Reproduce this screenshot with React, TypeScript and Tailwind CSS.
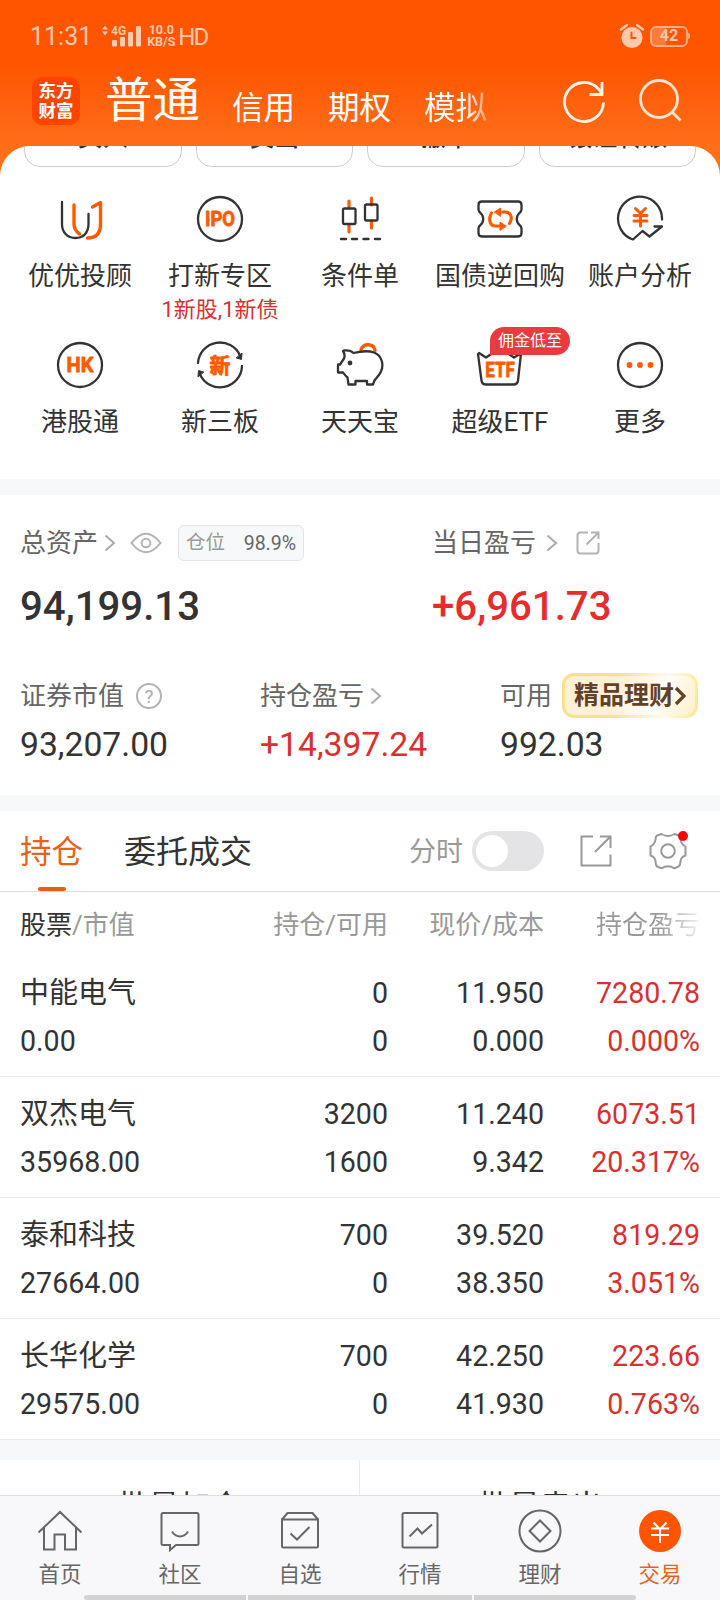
import type { ReactNode } from 'react'
import clsx from 'clsx'

const DARK = '#333333'
const ORANGE = '#ff5a00'

type Shortcut = {
  label: string
  icon: ReactNode
  hint?: string
  badge?: string
}

type Holding = {
  name: string
  value: string
  held: string
  available: string
  price: string
  cost: string
  profit: string
  rate: string
}

function Icon({ children }: { children: ReactNode }) {
  return (
    <svg width="48" height="48" viewBox="0 0 48 48" fill="none" stroke={DARK} strokeWidth="2.300" strokeLinecap="round" strokeLinejoin="round">
      {children}
    </svg>
  )
}

function IconText({ children, size, y, width }: { children: string; size: number; y: number; width: number }) {
  return (
    <text
      x="24"
      y={y}
      textAnchor="middle"
      textLength={width}
      lengthAdjust="spacingAndGlyphs"
      fontSize={size}
      fontWeight="700"
      fill={ORANGE}
      stroke={ORANGE}
      strokeWidth="0.800"
    >
      {children}
    </text>
  )
}

const shortcuts: Shortcut[] = [
  {
    label: '优优投顾',
    icon: (
      <Icon>
        <path d="M6 7v22c0 8 5 14 13.500 14S32.500 37 32.500 29V19" />
        <path d="M18 10v19c0 4.500 2 7.500 5.500 10M36.500 12l8-4.500v21.500c0 9-4 14-13 14" stroke={ORANGE} strokeWidth="3.400" />
      </Icon>
    ),
  },
  {
    label: '打新专区',
    hint: '1新股,1新债',
    icon: (
      <Icon>
        <circle cx="24" cy="24" r="22" />
        <IconText size={20.500} y={31.300} width={30}>IPO</IconText>
      </Icon>
    ),
  },
  {
    label: '条件单',
    icon: (
      <Icon>
        <path d="M13 6v7M13 30v7M35.500 3v7M35.500 26v7" stroke={ORANGE} strokeWidth="3.200" />
        <rect x="7" y="13.500" width="12.500" height="15.500" rx="1.500" />
        <rect x="29" y="9.500" width="12.500" height="16" rx="1.500" />
        <path d="M5 44h5M16 44h5M27.500 44h5M39 44h5" strokeWidth="2.400" />
      </Icon>
    ),
  },
  {
    label: '国债逆回购',
    icon: (
      <Icon>
        <path d="M6 6.500h36q3.500 0 3.500 3.500v4.500q0 2-2 3.500a8 8 0 0 0 0 12q2 1.500 2 3.500v4.500q0 3.500-3.500 3.500H6q-3.500 0-3.500-3.500V33.500q0-2 2-3.500a8 8 0 0 0 0-12q-2-1.500-2-3.500V10q0-3.500 3.500-3.500z" />
        <path d="M24 17h5c6 0 8 6 4.500 11.500M15.500 18c-3 5-2.500 13 4 13H24" stroke={ORANGE} strokeWidth="3.200" />
        <path d="M18.500 17l6-4v8zM30 31l-6-4v8z" fill={ORANGE} stroke={ORANGE} strokeWidth="1" />
      </Icon>
    ),
  },
  {
    label: '账户分析',
    icon: (
      <Icon>
        <path d="M46 24.500A22 22 0 1 0 17 44.500l9.500-8.500 7 5.500L46 31.500h-7.500" />
        <path d="M19.500 13.500l5 5 5-5M24.500 18.500V31M18 20.500h13M18 26h13" stroke={ORANGE} strokeWidth="3" />
      </Icon>
    ),
  },
  {
    label: '港股通',
    icon: (
      <Icon>
        <circle cx="24" cy="24" r="22" />
        <IconText size={20.500} y={31.300} width={27}>HK</IconText>
      </Icon>
    ),
  },
  {
    label: '新三板',
    icon: (
      <Icon>
        <path d="M2 22A22 22 0 0 1 44 14.500M46 25A22 22 0 0 1 4 33.500" />
        <path d="M40.500 17l5 1.500.500-6zM7.500 31l-5-1.500-.500 6z" fill={DARK} strokeWidth="1" />
        <IconText size={21} y={32} width={21}>新</IconText>
      </Icon>
    ),
  },
  {
    label: '天天宝',
    icon: (
      <Icon>
        <path d="M25 8.500c3-7 13-6 14 1" stroke={ORANGE} strokeWidth="3.400" />
        <path d="M8 9.500c4.500-.500 7 0 9.500 2.500 8-2 15-2.500 20.500-.500 8 3 10 12 7 19-1.500 3.500-4 6-6.500 9l-1.500 4h-6v-3.500H19.500v3.500h-7l-1-7c-2-1.500-3-3-4.500-5H2v-8h2l4-6q1.500-4-1-7.500z" />
        <circle cx="14" cy="22" r="2.400" fill={DARK} stroke="none" />
      </Icon>
    ),
  },
  {
    label: '超级ETF',
    badge: '佣金低至',
    icon: (
      <Icon>
        <path d="M3 12l7 4.500 6-4h16l6 4 7-4-3 27q-.500 4-4.500 4H10q-4 0-4.500-4L2 13z" />
        <IconText size={21} y={35.500} width={29.500}>ETF</IconText>
      </Icon>
    ),
  },
  {
    label: '更多',
    icon: (
      <Icon>
        <circle cx="24" cy="24" r="22" />
        <g fill={ORANGE} stroke="none">
          <circle cx="13.500" cy="24" r="2.900" />
          <circle cx="24" cy="24" r="2.900" />
          <circle cx="34.500" cy="24" r="2.900" />
        </g>
      </Icon>
    ),
  },
]

const holdings: Holding[] = [
  { name: '中能电气', value: '0.00', held: '0', available: '0', price: '11.950', cost: '0.000', profit: '7280.78', rate: '0.000%' },
  { name: '双杰电气', value: '35968.00', held: '3200', available: '1600', price: '11.240', cost: '9.342', profit: '6073.51', rate: '20.317%' },
  { name: '泰和科技', value: '27664.00', held: '700', available: '0', price: '39.520', cost: '38.350', profit: '819.29', rate: '3.051%' },
  { name: '长华化学', value: '29575.00', held: '700', available: '0', price: '42.250', cost: '41.930', profit: '223.66', rate: '0.763%' },
]

const navItems: { label: string; active?: boolean; icon: ReactNode }[] = [
  { label: '首页', icon: <path d="M1.500 23.500L23 3l21.500 20.500M7 19v21.500h10.500V25.500h10.500v15H39V19" /> },
  { label: '社区', icon: <path d="M6 4h34q1.500 0 1.500 1.500v29q0 1.500-1.500 1.500H19l-6 5v-5H6q-1.500 0-1.500-1.500v-29Q4.500 4 6 4zM15 22.500c4 6.500 12 6.500 16 0" /> },
  { label: '自选', icon: <path d="M5 10.500h36v26.500q0 1.500-1.500 1.500h-33Q5 38.500 5 37zM5 10.500L10.500 4h25L41 10.500M13.500 24.500l6.500 6 12.500-12.500" /> },
  { label: '行情', icon: <path d="M7 4h32q1.500 0 1.500 1.500V37q0 1.500-1.500 1.500H7q-1.500 0-1.500-1.500V5.500Q5.500 4 7 4zM12.500 27.500l8-8 4.500 5 10-9" /> },
  { label: '理财', icon: <path d="M23 1.500a20.500 20.500 0 1 0 0 41 20.500 20.500 0 1 0 0-41zM23 11.500L33.500 22 23 32.500 12.500 22z" /> },
  { label: '交易', active: true, icon: null },
]

function Chevron({ className }: { className?: string }) {
  return (
    <svg className={className} width="12" height="18" viewBox="0 0 12 18" fill="none" stroke="#aaaaaa" strokeWidth="2">
      <path d="M1.500 1.500L10 9l-8.500 7.500" />
    </svg>
  )
}

function StatusBar() {
  return (
    <div className="flex h-[72px] items-center pr-[30px] pl-[30px] text-[#ffc9ac]">
      <span className="mt-0.5 text-[25px] leading-[72px]">11:31</span>
      <svg className="ml-[9px]" width="40" height="26" viewBox="0 0 40 26" fill="currentColor">
        <path d="M1 6.500l3-4 3 4zM1 8.500h6l-3 4z" />
        <text x="10" y="11.500" fontSize="12" fontWeight="700">4G</text>
        <rect x="11" y="17" width="5" height="6.500" rx="1" />
        <rect x="19" y="14" width="5" height="9.500" rx="1" />
        <rect x="27" y="9" width="5" height="14.500" rx="1" />
        <rect x="35" y="3" width="5" height="20.500" rx="1" />
      </svg>
      <div className="ml-[6px] flex w-7 flex-col items-center text-[12.500px] leading-[12px] font-bold whitespace-nowrap">
        <span>10.0</span>
        <span>KB/S</span>
      </div>
      <span className="mt-0.5 ml-[3px] text-[24px] tracking-[-2px]">HD</span>
      <div className="ml-auto flex items-center gap-[5px]">
        <svg width="26" height="26" viewBox="0 0 26 26" fill="none" stroke="#ffc9ac" strokeWidth="2.400" strokeLinecap="round">
          <circle cx="13" cy="14.500" r="9.800" fill="#ffc9ac" strokeWidth="1.500" />
          <path d="M2 6.500l6-4.500M24 6.500L18 2" />
          <path d="M12.500 9.500v5.500h4" stroke="#ff5500" strokeWidth="2" />
        </svg>
        <div className="flex items-center">
          <div className="flex h-[21px] w-[38px] items-center justify-center rounded-md border-2 border-[#ffab80] bg-linear-to-r from-[#ff7a38] from-42% to-[#ff5500] to-42% text-[16px] leading-none font-bold">42</div>
          <div className="h-1.5 w-[2px] rounded-r bg-[#ffab80]" />
        </div>
      </div>
    </div>
  )
}

function Header() {
  return (
    <header className="h-[146px]">
      <StatusBar />
      <div className="flex h-[74px] items-start pl-8 text-white">
        <div className="mt-[5px] flex h-12 w-12 flex-col items-center justify-center rounded-[10px] bg-[#ff4400] text-[17.500px] leading-[20px] font-bold">
          <span>东方</span>
          <span>财富</span>
        </div>
        <span className="mt-px ml-[25px] text-[47.500px] leading-[56px]">普通</span>
        <div className="mt-3.5 ml-[32px] flex gap-[33px] text-[31.500px] leading-[46px]">
          <span>信用</span>
          <span>期权</span>
          <span className="bg-linear-to-r from-white from-65% to-[#ffa06a] bg-clip-text text-transparent">模拟</span>
        </div>
        <svg className="mt-1.5 ml-auto" width="46" height="46" viewBox="0 0 46 46" fill="none" stroke="#fff5ee" strokeWidth="2.800">
          <path d="M42.500 24.500A19.500 19.500 0 1 1 38 11.500L41 16M41 4v12.500H28.500" />
        </svg>
        <svg className="mt-1.5 mr-[37px] ml-[30px]" width="46" height="46" viewBox="0 0 46 46" fill="none" stroke="#ffe4d4" strokeWidth="2.800">
          <circle cx="22" cy="21" r="18.500" />
          <path d="M34.500 33.500l9 9" />
        </svg>
      </div>
    </header>
  )
}

function Shortcuts() {
  return (
    <section className="h-[333px] overflow-hidden rounded-t-[30px] bg-white">
      <div className="-mt-[38px] grid grid-cols-4 gap-3.5 px-6">
        {['买入', '卖出', '撤单', '银证转账'].map((label) => (
          <button key={label} type="button" className="h-[59px] rounded-2xl border border-[#cccccc] text-[25px] leading-[55px] font-medium">
            {label}
          </button>
        ))}
      </div>
      <div className="mt-7 grid grid-cols-5 px-2.5">
        {shortcuts.map((item) => (
          <div key={item.label} className="relative flex h-[146px] flex-col items-center whitespace-nowrap">
            {item.icon}
            <span className="mt-[15px] text-[26px] leading-[36px]">{item.label}</span>
            {item.hint ? <span className="mt-px text-[22px] leading-[30px] text-[#d9302f]">{item.hint}</span> : null}
            {item.badge ? (
              <span className="absolute -top-[14px] left-[60px] h-7 w-20 rounded-[14px] rounded-bl-none bg-[#e93b3d] text-center text-[16px] leading-[27px] text-white">
                {item.badge}
              </span>
            ) : null}
          </div>
        ))}
      </div>
    </section>
  )
}

function Assets() {
  return (
    <section className="h-[300px] bg-white pt-[30px] pl-5">
      <div className="grid grid-cols-[412px_1fr]">
        <div>
          <div className="flex h-9 items-center text-[26px] leading-9 text-[#666666]">
            <span>总资产</span>
            <Chevron className="ml-1.5" />
            <svg className="ml-[14px]" width="32" height="24" viewBox="0 0 32 24" fill="none" stroke="#b3b3b3" strokeWidth="2">
              <path d="M1.500 12Q16-6.500 30.500 12 16 30.500 1.500 12z" />
              <circle cx="16" cy="12" r="4.300" />
            </svg>
            <div className="ml-4 flex h-9 w-[126px] items-center justify-between rounded-md border border-[#e3e4e8] bg-[#f7f8fa] pr-[7px] pl-[7px] leading-none">
              <span className="text-[19.500px] text-[#999999]">仓位</span>
              <span className="mt-0.5 text-[19.500px]">98.9%</span>
            </div>
          </div>
          <div className="mt-[22px] text-[40.200px] leading-[48px] font-medium">94,199.13</div>
        </div>
        <div>
          <div className="flex h-9 items-center text-[26px] leading-9 text-[#666666]">
            <span>当日盈亏</span>
            <Chevron className="ml-2.5" />
            <svg className="ml-[18px]" width="24" height="24" viewBox="0 0 24 24" fill="none" stroke="#b3b3b3" strokeWidth="2">
              <path d="M12 1.500H4.500q-3 0-3 3v15q0 3 3 3h15q3 0 3-3V12M10.500 13.500L22.500 1.500M15 1.500h7.500V8" />
            </svg>
          </div>
          <div className="mt-[22px] text-[40.200px] leading-[48px] font-medium text-[#e62c2c]">+6,961.73</div>
        </div>
      </div>
      <div className="mt-[41px] grid grid-cols-[240px_240px_1fr] whitespace-nowrap">
        <div>
          <div className="flex h-12 items-center text-[26px] text-[#666666]">
            <span>证券市值</span>
            <svg className="ml-[11px]" width="28" height="28" viewBox="0 0 28 28" fill="none" stroke="#b3b3b3" strokeWidth="2">
              <circle cx="14" cy="14" r="12" />
              <text x="14" y="21" textAnchor="middle" fontSize="19" fill="#aaaaaa" stroke="none">?</text>
            </svg>
          </div>
          <div className="mt-[3px] text-[33.700px] leading-[44px]">93,207.00</div>
        </div>
        <div>
          <div className="flex h-12 items-center text-[26px] text-[#666666]">
            <span>持仓盈亏</span>
            <Chevron className="ml-1.5" />
          </div>
          <div className="mt-[3px] text-[33.700px] leading-[44px] text-[#d9302f]">+14,397.24</div>
        </div>
        <div>
          <div className="flex h-12 items-center text-[26px] text-[#666666]">
            <span>可用</span>
            <div className="ml-2.5 h-[45px] w-[136px] -translate-y-px rounded-[12px] bg-linear-100 from-[#fbe08a] from-40% via-[#fffaf0] via-75% to-[#fbe88a] p-[3px]">
              <div className="flex h-full items-center justify-center rounded-[9px] bg-linear-115 from-[#fff0d6] from-40% via-[#fffdf8] via-70% to-[#fff0c8] pt-0.5 text-[25px] font-bold text-[#62412a]">
                <span>精品理财</span>
                <svg width="12" height="20" viewBox="0 0 12 20" fill="none" stroke="#62412a" strokeWidth="3.200">
                  <path d="M2 2l8 8-8 8" />
                </svg>
              </div>
            </div>
          </div>
          <div className="mt-[3px] text-[33.700px] leading-[44px]">992.03</div>
        </div>
      </div>
    </section>
  )
}

function Tabs() {
  return (
    <div className="flex h-[81px] items-center border-b border-[#dddddd] bg-white px-5">
      <div className="relative pt-[3px] text-[31.500px] leading-[77px] text-[#e8611a]">
        持仓
        <div className="absolute bottom-0 left-[18px] h-1 w-7 rounded-sm bg-[#ea5c15]" />
      </div>
      <span className="mt-[2px] ml-[41px] text-[32px]">委托成交</span>
      <span className="mt-0.5 ml-auto text-[27px] text-[#999999]">分时</span>
      <div className="ml-[9px] h-10 w-[72px] rounded-full bg-[#e4e4e6] p-1">
        <div className="h-8 w-8 rounded-full bg-white" />
      </div>
      <svg className="ml-[36px]" width="32" height="32" viewBox="0 0 32 32" fill="none" stroke="#999999" strokeWidth="2">
        <path d="M13 1.500H1.500v29h29V19.500M15 17L30.500 1.500M20 1.500h10.500V13" />
      </svg>
      <div className="relative mr-[13px] ml-[37px]">
        <svg width="38" height="38" viewBox="0 0 38 38" fill="none" stroke="#999999" strokeWidth="2" strokeLinejoin="round">
          <circle cx="19" cy="19" r="6.800" />
          <path d="M8 3.500L12.500 2q6.500 4 13 0L30 3.500q1.500 1 1.500 4 .500 4.500 5 7v9q-4.500 1.500-5 5.500 0 4-2 5.500l-4 1.800q-6.500-4-13 0L8 34.500q-1.500-1.500-1.500-5.500-.500-4-5-5.500v-9q4.500-2.500 5-7 0-3 1.500-4z" />
        </svg>
        <div className="absolute -top-[1px] right-[-1px] h-2.5 w-2.5 rounded-full bg-[#ff0000]" />
      </div>
    </div>
  )
}

const columns = 'grid grid-cols-[200px_168px_156px_156px] px-5'

function Holdings() {
  return (
    <div className="bg-white">
      <div className={clsx(columns, 'h-16 pt-[9px] text-right text-[26px] leading-[48px] text-[#999999]')}>
        <div className="text-left">
          <span className="text-[#333333]">股票</span>/市值
        </div>
        <div>持仓/可用</div>
        <div>现价/成本</div>
        <div>
          <span className="bg-linear-to-r from-[#999999] from-60% to-[#f2f2f2] bg-clip-text text-transparent">持仓盈亏</span>
        </div>
      </div>
      {holdings.map((item) => (
        <div key={item.name} className={clsx(columns, 'h-[121px] border-b border-[#ebebeb] pt-[13px] text-right text-[28.600px] leading-[48px]')}>
          <div className="text-left">
            <p className="text-[29px]">{item.name}</p>
            <p>{item.value}</p>
          </div>
          <div>
            <p>{item.held}</p>
            <p>{item.available}</p>
          </div>
          <div>
            <p>{item.price}</p>
            <p>{item.cost}</p>
          </div>
          <div className="text-[#d9302f]">
            <p>{item.profit}</p>
            <p>{item.rate}</p>
          </div>
        </div>
      ))}
    </div>
  )
}

function BottomNav() {
  return (
    <nav className="h-[105px] border-t border-[#dfdfe2] bg-[#f8f8fa]">
      <div className="grid h-[99px] grid-cols-6 pt-[13px]">
        {navItems.map((item) => (
          <div key={item.label} className={clsx('flex flex-col items-center', item.active ? 'text-[#e8611a]' : 'text-[#666666]')}>
            {item.active ? (
              <svg width="46" height="46" viewBox="0 0 46 46" fill="none" stroke="#ffffff" strokeWidth="2">
                <circle cx="23" cy="22" r="21" fill="#ff5500" stroke="none" />
                <path d="M16.500 13.500L23 20.500l6.500-7M23 20.500V34M14 19.500h18M14 26h18" />
              </svg>
            ) : (
              <svg width="46" height="46" viewBox="0 0 46 46" fill="none" stroke="#666666" strokeWidth="2">
                {item.icon}
              </svg>
            )}
            <span className="mt-1 text-[21.500px] leading-[32px]">{item.label}</span>
          </div>
        ))}
      </div>
      <div className="flex h-[5px] gap-0.5 px-[84px]">
        <div className="w-[162px] rounded-l bg-[#d2d2d2]" />
        <div className="flex-1 bg-[#d2d2d2]" />
        <div className="w-[162px] rounded-r bg-[#d2d2d2]" />
      </div>
    </nav>
  )
}

export default function App() {
  return (
    <div className="h-[1600px] w-[720px] overflow-hidden bg-[#f7f8fa] font-['Roboto','Noto_Sans_CJK_SC',sans-serif] text-[#333333]">
      <div className="bg-linear-to-b from-[#ff5500] from-[65px] to-[#ff6e18] to-[146px]">
        <Header />
        <Shortcuts />
      </div>
      <div className="h-4" />
      <Assets />
      <div className="h-4" />
      <Tabs />
      <Holdings />
      <div className="mt-5 grid h-[35px] grid-cols-2 overflow-hidden bg-white text-center text-[31px] leading-[94px]">
        <div className="border-r border-[#ebebeb]">批量加仓</div>
        <div>批量卖出</div>
      </div>
      <BottomNav />
    </div>
  )
}
